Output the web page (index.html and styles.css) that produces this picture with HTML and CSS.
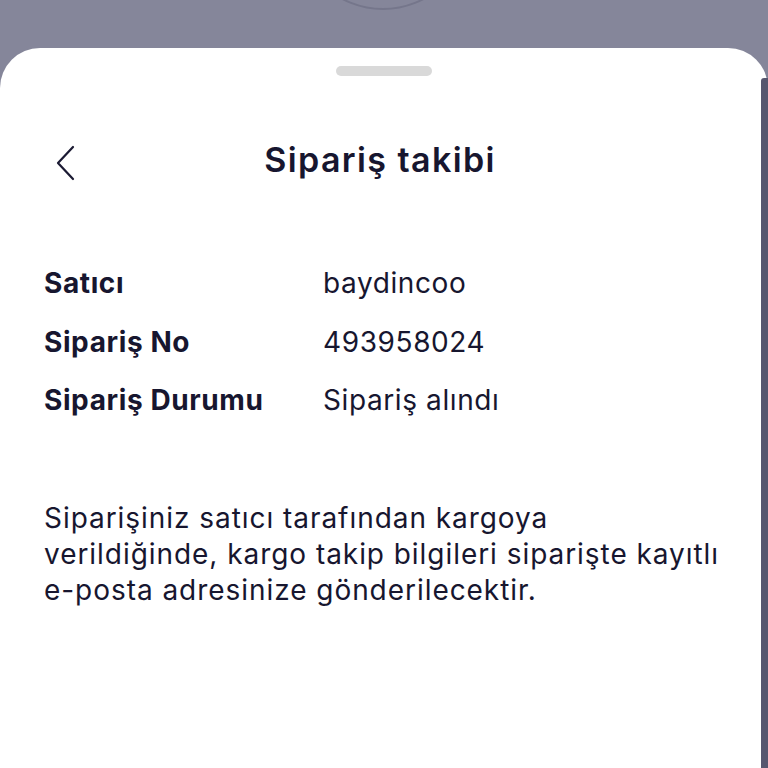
FILE: index.html
```html
<!DOCTYPE html>
<html lang="tr">
<head>
  <meta charset="UTF-8">
  <title>Sipariş takibi</title>
  <link rel="stylesheet" href="styles.css">
</head>
<body>

  <!-- ring of the screen behind the sheet -->
  <div class="backdrop-ring"></div>

  <div class="sheet">
    <div class="handle"></div>

    <div class="sheet-header">
      <button class="back-btn" aria-label="Geri">
        <svg width="20" height="36" viewBox="0 0 20 36">
          <path d="M17 2 L2 18 L17 34" fill="none" stroke="#1b1a33" stroke-width="2.2" stroke-linecap="round" stroke-linejoin="round"/>
        </svg>
      </button>
      <h1>Sipariş takibi</h1>
    </div>

    <div class="info">
      <div class="info-row">
        <div class="label">Satıcı</div>
        <div class="value">baydincoo</div>
      </div>
      <div class="info-row">
        <div class="label">Sipariş No</div>
        <div class="value">493958024</div>
      </div>
      <div class="info-row">
        <div class="label">Sipariş Durumu</div>
        <div class="value">Sipariş alındı</div>
      </div>
    </div>

    <p class="note">Siparişiniz satıcı tarafından kargoya<br>verildiğinde, kargo takip bilgileri siparişte kayıtlı<br>e-posta adresinize gönderilecektir.</p>

    <div class="scrollbar"></div>
  </div>

</body>
</html>
```

FILE: styles.css
```css
html, body {
  height: 100%;
}

body {
  margin: 0;
  background-color: #85869a;
  font-family: "Inter", "Noto Sans", sans-serif;
  color: #17162f;
  overflow: hidden;
  position: relative;
}

.backdrop-ring {
  position: absolute;
  left: 295px;
  top: -166px;
  width: 172px;
  height: 172px;
  border: 2px solid #75768b;
  border-radius: 50%;
}

.sheet {
  position: relative;
  margin-top: 48px;
  height: 720px;
  background-color: #ffffff;
  border-radius: 40px 40px 0 0;
  padding: 18px 0 0 44px;
  box-sizing: border-box;
}

.handle {
  width: 96px;
  height: 10px;
  margin-left: 292px;
  background-color: #d9d9d9;
  border-radius: 5px;
}

.sheet-header {
  position: relative;
  height: 60px;
  margin-top: 57px;
  margin-right: 44px;
  display: flex;
  align-items: center;
  justify-content: center;
}

.back-btn {
  position: absolute;
  left: 12px;
  top: 12px;
  padding: 0;
  border: none;
  background: none;
  display: flex;
}

.sheet-header h1 {
  margin: 0 8px 8px 0;
  font-size: 34px;
  font-weight: 600;
  letter-spacing: 1.4px;
}

.info {
  margin-top: 61px;
}

.info-row {
  display: flex;
  align-items: center;
  height: 58.5px;
  font-size: 28px;
}

.label {
  width: 279px;
  font-weight: 700;
  letter-spacing: 0.6px;
}

.value {
  font-weight: 400;
  letter-spacing: 0.6px;
}

.note {
  margin: 70px 0 0;
  font-size: 28px;
  line-height: 36px;
  letter-spacing: 0.95px;
}

.scrollbar {
  position: absolute;
  right: 0;
  top: 30px;
  bottom: 0;
  width: 7px;
  background-color: #57576f;
  border-radius: 3px 0 0 0;
}
```
